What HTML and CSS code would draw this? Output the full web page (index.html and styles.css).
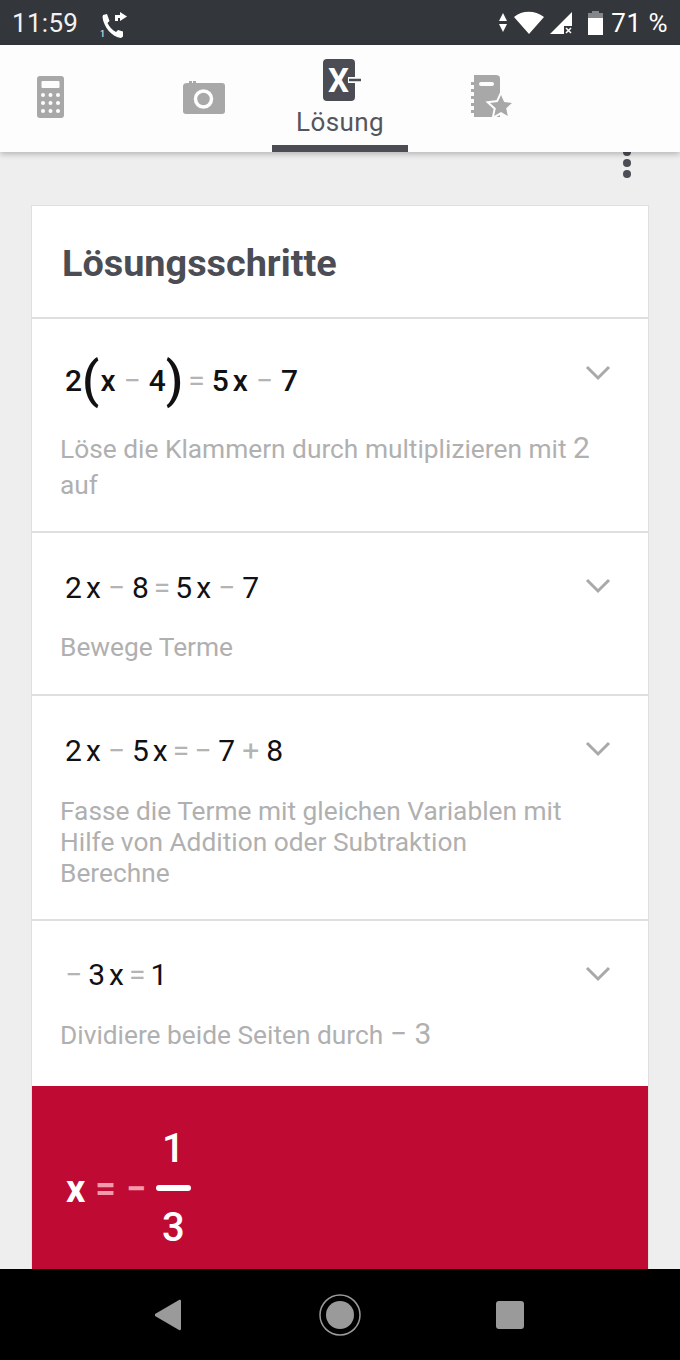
FILE: index.html
```html
<!DOCTYPE html>
<html lang="de">
<head>
  <meta charset="UTF-8">
  <title>Lösung</title>
  <link rel="stylesheet" href="styles.css">
</head>
<body>
<div class="phone">
  <div class="status">
    <span class="time">11:59</span>
    <svg class="call-icon" width="28" height="29" viewBox="0 0 28 29">
      <path fill="#fff" d="M3 5 7 4 9.500 11 7.500 13C9 16.500 12 20 16 22L18 20 23 21.500V26.500L21 28C12 27 3.500 17 2.500 7Z"/>
      <path fill="#fff" d="M15 5H20V2L27 6.500 20 11V8H18V11H15Z"/>
      <text class="call-sim" x="0" y="27">1</text>
    </svg>
    <div class="status-right">
      <svg width="10" height="20" viewBox="0 0 10 20"><path fill="#fff" d="M5 0 9 8H1ZM1 11H9L5 19Z"/></svg>
      <svg width="30" height="23" viewBox="0 0 30 23"><path fill="#fff" d="M0 6C8-1 21-1 30 6L15 23Z"/></svg>
      <svg width="24" height="24" viewBox="0 0 24 24"><path fill="#fff" d="M22 1V15H14V23H0Z"/><path stroke="#fff" stroke-width="1.500" d="M16 17 21 22M21 17 16 22"/></svg>
      <svg class="battery" width="15" height="24" viewBox="0 0 15 24"><path fill="#84878a" d="M4 0H11V2H15V10H0V2H4Z"/><path fill="#fff" d="M0 7H15V24H0Z"/></svg>
      <span class="percent">71 %</span>
    </div>
  </div>

  <div class="tabs">
    <div class="tab">
      <svg width="28" height="42" viewBox="0 0 28 42">
        <rect width="27" height="42" rx="3" fill="#a8a8a8"/>
        <rect x="4.500" y="5" width="18" height="7" rx="1" fill="#fdfdfd"/>
        <g fill="#fdfdfd">
          <circle cx="6" cy="19" r="2"/><circle cx="13.500" cy="19" r="2"/><circle cx="21" cy="19" r="2"/>
          <circle cx="6" cy="27" r="2"/><circle cx="13.500" cy="27" r="2"/><circle cx="21" cy="27" r="2"/>
          <circle cx="6" cy="35" r="2"/><circle cx="13.500" cy="35" r="2"/><circle cx="21" cy="35" r="2"/>
        </g>
      </svg>
    </div>
    <div class="tab">
      <svg width="42" height="34" viewBox="0 0 42 34">
        <path fill="#a8a8a8" d="M4 2H6V0H9V2H10V0H13V2H39C41 2 42 3 42 5V30C42 32 41 33 39 33H3C1 33 0 32 0 30V5C0 3 2 2 4 2Z"/>
        <circle cx="20.500" cy="18" r="8" fill="none" stroke="#fdfdfd" stroke-width="3.500"/>
      </svg>
    </div>
    <div class="tab active">
      <svg width="38" height="42" viewBox="0 0 38 42">
        <rect width="32" height="42" rx="4" fill="#4b4c54"/>
        <text class="tab-x" x="5" y="33">X</text>
        <path stroke="#fdfdfd" stroke-width="6" d="M25 21H32"/>
        <path stroke="#4b4c54" stroke-width="2.500" d="M26 21H38"/>
      </svg>
      <span class="tab-label">Lösung</span>
    </div>
    <div class="tab">
      <svg width="44" height="43" viewBox="0 0 44 43">
        <path fill="#a8a8a8" d="M4 0H26C28 0 30 1 30 3V42H4V38H1V35H4V31H1V28H4V24H1V21H4V17H1V14H4V10H1V7H4Z"/>
        <rect x="9" y="7" width="15" height="4" rx="2" fill="#fdfdfd"/>
        <path class="star-halo" d="M31 20 34.200 27 42 28 36.200 33.200 37.800 41 31 37 24.200 41 25.800 33.200 20 28 27.800 27Z"/>
        <path class="star" d="M31 20 34.200 27 42 28 36.200 33.200 37.800 41 31 37 24.200 41 25.800 33.200 20 28 27.800 27Z"/>
      </svg>
    </div>
  </div>

  <div class="content">
    <div class="more">
      <span class="dot"></span><span class="dot"></span><span class="dot"></span>
    </div>
    <div class="card">
      <h1 class="card-title">Lösungsschritte</h1>

      <div class="step step-first">
        <div class="math">
          <span>2</span><span class="paren paren-left">(</span><span>x</span><span class="op">−</span><span>4</span><span class="paren paren-right">)</span><span class="op op-eq">=</span><span>5</span><span class="var">x</span><span class="op">−</span><span>7</span>
        </div>
        <svg class="chevron" width="26" height="16" viewBox="0 0 26 16"><path d="M2 2 13 13 24 2" fill="none" stroke="#a9a9a9" stroke-width="3"/></svg>
        <p class="desc">Löse die Klammern durch multiplizieren mit <span class="num">2</span> auf</p>
      </div>

      <div class="step step-second">
        <div class="math">
          <span>2</span><span class="var">x</span><span class="op">−</span><span>8</span><span class="op op-eq">=</span><span>5</span><span class="var">x</span><span class="op">−</span><span>7</span>
        </div>
        <svg class="chevron" width="26" height="16" viewBox="0 0 26 16"><path d="M2 2 13 13 24 2" fill="none" stroke="#a9a9a9" stroke-width="3"/></svg>
        <p class="desc">Bewege Terme</p>
      </div>

      <div class="step step-third">
        <div class="math">
          <span>2</span><span class="var">x</span><span class="op">−</span><span>5</span><span class="var">x</span><span class="op op-eq">=</span><span class="op op-neg">−</span><span>7</span><span class="op">+</span><span>8</span>
        </div>
        <svg class="chevron" width="26" height="16" viewBox="0 0 26 16"><path d="M2 2 13 13 24 2" fill="none" stroke="#a9a9a9" stroke-width="3"/></svg>
        <p class="desc">Fasse die Terme mit gleichen Variablen mit Hilfe von Addition oder Subtraktion Berechne</p>
      </div>

      <div class="step step-fourth">
        <div class="math">
          <span class="op op-lead">−</span><span>3</span><span class="var">x</span><span class="op op-eq">=</span><span>1</span>
        </div>
        <svg class="chevron" width="26" height="16" viewBox="0 0 26 16"><path d="M2 2 13 13 24 2" fill="none" stroke="#a9a9a9" stroke-width="3"/></svg>
        <p class="desc">Dividiere beide Seiten durch <span class="num">− 3</span></p>
      </div>

      <div class="result">
        <span class="result-x">x</span>
        <span class="result-op">=</span>
        <span class="result-op">−</span>
        <div class="frac">
          <span>1</span>
          <span class="frac-line"></span>
          <span>3</span>
        </div>
      </div>
    </div>
  </div>

  <div class="navbar">
    <svg width="28" height="32" viewBox="0 0 28 32"><path fill="#9a9a9a" d="M1 15 25 1C26 0.500 27 1 27 2V30C27 31 26 31.500 25 31L1 17Z"/></svg>
    <svg width="42" height="42" viewBox="0 0 42 42"><circle cx="21" cy="21" r="20" fill="none" stroke="#9a9a9a" stroke-width="1.500"/><circle cx="21" cy="21" r="14" fill="#9a9a9a"/></svg>
    <span class="recent"></span>
  </div>
</div>
</body>
</html>
```

FILE: styles.css
```css
* {
  padding: 0;
  margin: 0;
  box-sizing: border-box;
}

body {
  font-family: Roboto, "Liberation Sans", sans-serif;
  background: #000;
}

.phone {
  width: 680px;
  height: 1360px;
  display: flex;
  flex-direction: column;
  overflow: hidden;
}

/* status bar */
.status {
  height: 45px;
  flex: none;
  background: #33363a;
  color: #fff;
  display: flex;
  align-items: center;
  padding: 0 12px;
}

.time {
  font-size: 26px;
  letter-spacing: 0.3px;
  color: #f2f2f2;
}

.call-icon {
  margin-left: 22px;
  margin-top: 3px;
}

.call-sim {
  font-size: 9px;
  fill: #fff;
}

.status-right {
  margin-left: auto;
  display: flex;
  align-items: center;
  gap: 6px;
}

.battery {
  margin-left: 8px;
}

.percent {
  font-size: 26px;
  letter-spacing: 0.5px;
  margin-left: 2px;
}

/* tabs */
.tabs {
  height: 107px;
  flex: none;
  background: #fdfdfd;
  display: flex;
  box-shadow: 0 2px 6px rgba(0, 0, 0, 0.25);
  position: relative;
  z-index: 2;
}

.tab {
  width: 136px;
  display: flex;
  flex-direction: column;
  align-items: center;
  padding-top: 31px;
}

.tab:nth-child(1) {
  width: 102px;
}

.tab:nth-child(2) {
  width: 170px;
  padding-left: 34px;
  padding-top: 36px;
}

.tab:nth-child(4) {
  width: 166px;
  padding-left: 2px;
  padding-top: 30px;
}

.tab.active {
  padding-top: 14px;
  border-bottom: 7px solid #4b4c54;
}

.tab.active svg {
  margin-left: 3px;
}

.tab-x {
  font-size: 33px;
  font-weight: 700;
  fill: #fdfdfd;
  font-family: Roboto, sans-serif;
}

.star-halo {
  fill: none;
  stroke: #fdfdfd;
  stroke-width: 4px;
}

.star {
  fill: #a8a8a8;
}

.tab-label {
  font-size: 26px;
  color: #55565c;
  margin-top: 6px;
  letter-spacing: 0.4px;
}

/* content */
.content {
  flex: 1;
  min-height: 0;
  background: #eeeeee;
  padding: 0 31px;
  overflow: hidden;
  position: relative;
}

.more {
  height: 49px;
  display: flex;
  flex-direction: column;
  align-items: flex-end;
  gap: 3px;
  padding-right: 18px;
  margin-top: -4px;
}

.dot {
  width: 8px;
  height: 8px;
  flex: none;
  border-radius: 50%;
  background: #4b4c54;
}

.card {
  background: #fff;
  border: 1px solid #dfdfdf;
  border-bottom: 0;
  width: 618px;
  margin-top: 8px;
}

.card-title {
  height: 113px;
  font-size: 37.8px;
  font-weight: 700;
  color: #4b4c54;
  line-height: 115px;
  padding-left: 30px;
  border-bottom: 2px solid #dfdfdf;
}

.step {
  position: relative;
  padding: 0 28px;
  border-bottom: 2px solid #dfdfdf;
}

.step-first {
  height: 214px;
  padding-top: 41px;
}

.step-second {
  height: 163px;
  padding-top: 34px;
}

.step-third {
  height: 225px;
  padding-top: 34px;
}

.step-fourth {
  height: 165px;
  padding-top: 33px;
  border-bottom: 0;
}

.math {
  height: 40px;
  display: flex;
  align-items: center;
  font-size: 30px;
  font-weight: 500;
  color: #111113;
  padding-left: 5px;
}

.step-second .math,
.step-third .math,
.step-fourth .math {
  font-weight: 400;
}

.var {
  margin-left: 4px;
}

.op {
  color: #b4b4b4;
  margin: 0 7px;
  font-weight: 400;
}

.step-first .op {
  margin: 0 8px;
}

.step-first .op-eq {
  margin: 0 7px 0 5px;
}

.op-eq {
  margin: 0 5px;
}

.op-neg {
  margin: 0 7px 0 0;
}

.op-lead {
  margin: 0 6px 0 0;
}

.paren {
  font-size: 50px;
  font-weight: 500;
  line-height: 40px;
}

.paren-left {
  margin-right: 1px;
}

.chevron {
  position: absolute;
  right: 37px;
  top: 45px;
}

.step-first .chevron {
  top: 46px;
}

.desc {
  font-size: 26.3px;
  line-height: 31px;
  color: #b0b0b0;
  width: 510px;
}

.step-first .desc {
  line-height: 36px;
  margin-top: 30px;
  width: 540px;
}

.step-second .desc {
  margin-top: 25px;
}

.step-third .desc {
  margin-top: 26px;
}

.step-fourth .desc {
  margin-top: 24px;
}

.num {
  font-size: 30px;
}

/* result */
.result {
  height: 183px;
  background: #bf0b33;
  color: #fff;
  display: flex;
  align-items: center;
  padding: 22px 0 0 34px;
  font-size: 40px;
}

.result-x {
  font-weight: 700;
  font-size: 38px;
}

.result-op {
  color: #f29aab;
  font-weight: 700;
  margin-left: 10px;
  font-size: 36px;
}

.frac {
  margin-left: 10px;
  display: flex;
  flex-direction: column;
  align-items: center;
  width: 35px;
  font-weight: 500;
  line-height: 44px;
}

.frac-line {
  width: 35px;
  height: 6px;
  flex: none;
  background: #fff;
  border-radius: 3px;
  margin: 14px 0 15px;
}

/* nav bar */
.navbar {
  height: 91px;
  flex: none;
  background: #000;
  display: flex;
  align-items: center;
  padding-left: 154px;
  padding-top: 1px;
  gap: 137px;
}

.recent {
  width: 28px;
  height: 28px;
  border-radius: 3px;
  background: #9a9a9a;
  margin-left: -2px;
}
```
